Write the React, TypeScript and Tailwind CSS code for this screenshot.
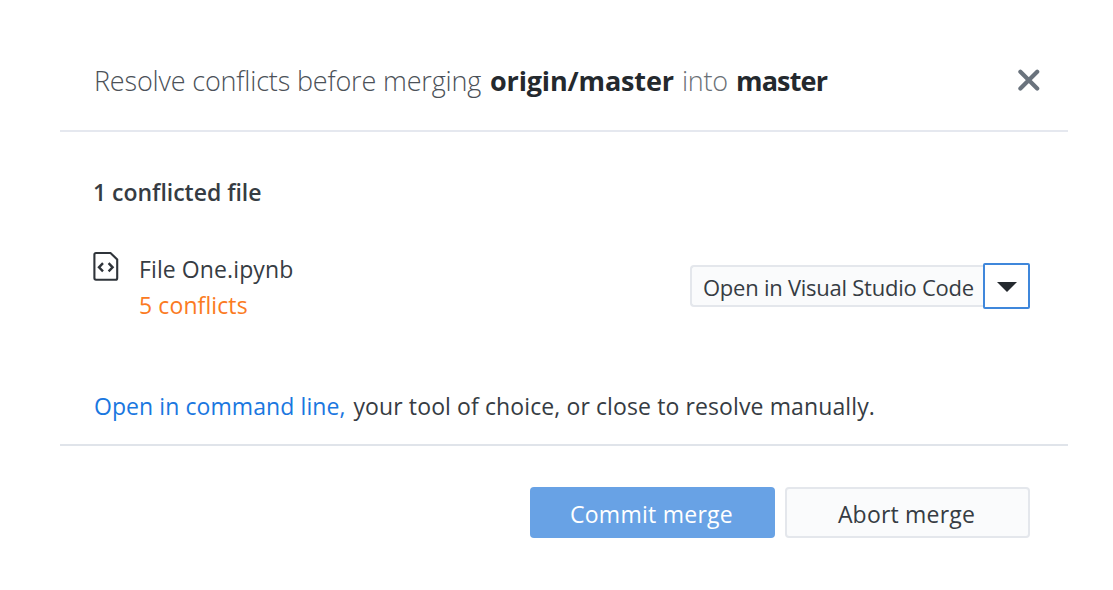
import React from "react";

function FileCodeIcon() {
  return (
    <svg width="26" height="30" viewBox="0 0 26 30" fill="none" stroke="#2f343a" strokeWidth="2.1" className="shrink-0">
      <path d="M3 2H17.5L24.2 8.4V27Q24.2 28.8 22.6 28.8H3Q1.4 28.8 1.4 27V3.6Q1.4 2 3 2Z" />
      <path d="M10 12.2L6 16.3L10 20.4M15.6 12.2L19.6 16.3L15.6 20.4" strokeWidth="2.4" />
    </svg>
  );
}

export default function App() {
  return (
    <main className="h-[590px] w-[1113px] overflow-hidden bg-white pl-[60px] pr-[45px] font-['Open_Sans',sans-serif] text-[23px] text-[#363c43] whitespace-nowrap">
      <header className="flex h-[132px] items-start justify-between border-b-2 border-[#e5e8ef] pt-[62px] pr-[28px] pl-[34px]">
        <h1 className="flex gap-[8px] text-[27px] leading-[38px] font-light">
          <span className="w-[388px] text-[#4b5158] tracking-[-0.17px]">Resolve conflicts before merging</span>
          <strong className="w-[184px] font-bold text-[#24292e] tracking-[-0.15px]">origin/master</strong>
          <span className="w-[46px] text-[#6a7076] tracking-[-0.3px]">into</span>
          <strong className="font-bold text-[#24292e] tracking-[-0.85px]">master</strong>
        </h1>
        <button aria-label="Close" className="mt-[7px]">
          <svg width="23" height="23" viewBox="0 0 23 23" fill="none" stroke="#6a737d" strokeWidth="4.2" strokeLinecap="round">
            <path d="M3.4 2.7L20.2 19.4M20.2 2.7L3.4 19.4" />
          </svg>
        </button>
      </header>

      <section className="flex h-[314px] flex-col border-b-2 border-[#e0e4ea] pt-[42px] pr-[38px] pl-[33px]">
        <h2 className="leading-[36px] font-semibold tracking-[-0.02px]">1 conflicted file</h2>
        <div className="mt-[41px] flex h-[72px]">
          <FileCodeIcon />
          <div className="ml-[20px] grow leading-[36px]">
            <p className="tracking-[0.1px]">File One.ipynb</p>
            <p className="tracking-[0.1px] text-[#fb7a22]">5 conflicts</p>
          </div>
          <div className="mt-[12px] flex h-[46px] items-center">
            <button className="h-[42px] w-[293px] rounded-l border-2 border-r-0 border-[#e4e7ec] bg-[#fafbfc] pt-[2px] pl-[11px] text-left text-[22px] leading-[36px] tracking-[-0.25px]">
              Open in Visual Studio Code
            </button>
            <button aria-label="Choose editor" className="flex h-[46px] w-[47px] items-center justify-center rounded-[2px] border-2 border-[#3f87db] bg-white pt-[2px]">
              <svg width="20" height="10" viewBox="0 0 20 10" fill="#24292e">
                <path d="M0 0H20L10 10Z" />
              </svg>
            </button>
          </div>
        </div>
        <p className="mt-[65px] flex gap-[8px] pl-px leading-[36px]">
          <a className="tracking-[0.08px] text-[#1a77e0]">Open in command line,</a>
          <span className="tracking-[0.11px]">your tool of choice, or close to resolve manually.</span>
        </p>
      </section>

      <footer className="flex justify-end gap-[10px] pt-[41px] pr-[38px]">
        <button className="h-[51px] w-[245px] rounded bg-[#68a2e5] pt-[4px] pr-[2px] tracking-[0.25px] font-medium text-white">Commit merge</button>
        <button className="h-[51px] w-[245px] rounded border-2 border-[#e4e7ec] bg-[#fafbfc] pt-[4px] pr-[2px] tracking-[0.2px]">Abort merge</button>
      </footer>
    </main>
  );
}
